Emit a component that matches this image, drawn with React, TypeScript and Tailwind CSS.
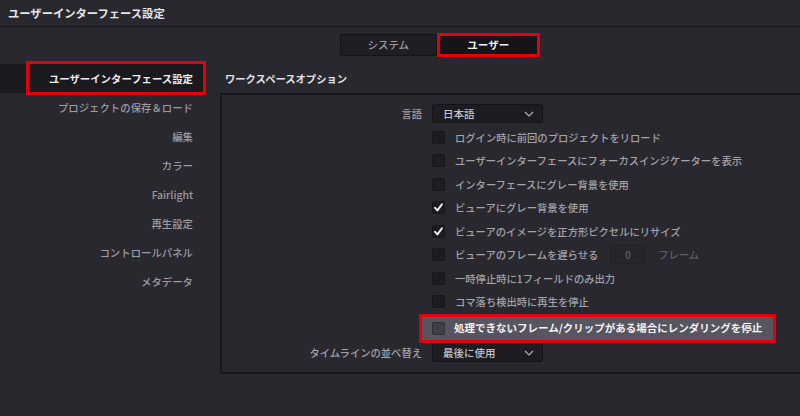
import React from "react"

const font = "font-['Noto_Sans_CJK_JP','Noto_Sans',sans-serif]"

const sidebarItems = [
  "プロジェクトの保存＆ロード",
  "編集",
  "カラー",
  "Fairlight",
  "再生設定",
  "コントロールパネル",
  "メタデータ",
]

const options: { label: string; checked: boolean; frames?: boolean }[] = [
  { label: "ログイン時に前回のプロジェクトをリロード", checked: false },
  { label: "ユーザーインターフェースにフォーカスインジケーターを表示", checked: false },
  { label: "インターフェースにグレー背景を使用", checked: false },
  { label: "ビューアにグレー背景を使用", checked: true },
  { label: "ビューアのイメージを正方形ピクセルにリサイズ", checked: true },
  { label: "ビューアのフレームを遅らせる", checked: false, frames: true },
  { label: "一時停止時に1フィールドのみ出力", checked: false },
  { label: "コマ落ち検出時に再生を停止", checked: false },
]

function Checkbox({ checked, light }: { checked?: boolean; light?: boolean }) {
  return (
    <div
      className={
        "flex h-[13px] w-[13px] shrink-0 items-center justify-center rounded-[2px] border " +
        (light ? "border-[#2e2d33] bg-[#403f45]" : "border-[#16151a] bg-[#1d1c21]")
      }
    >
      {checked && (
        <svg width="11" height="11" viewBox="0 0 11 11" fill="none">
          <path d="M2 5.8 L4.4 8.4 L9 2.2" stroke="#f4f4f4" strokeWidth="1.9" strokeLinecap="round" strokeLinejoin="round" />
        </svg>
      )}
    </div>
  )
}

function Dropdown({ value }: { value: string }) {
  return (
    <div className="flex h-[19px] w-[111px] items-center justify-between rounded-[2px] border border-[#141318] bg-[#1d1c21] pl-[10px] pr-[8px] text-[10.5px] text-[#c4c4c8]">
      <span>{value}</span>
      <svg width="10" height="6" viewBox="0 0 10 6" fill="none">
        <path d="M1 1 L5 5 L9 1" stroke="#b0b0b5" strokeWidth="1.2" />
      </svg>
    </div>
  )
}

export default function App() {
  return (
    <div className={`${font} h-[416px] w-[800px] overflow-hidden bg-[#29282f] font-medium text-[#a3a3a8]`}>
      <div className="flex h-[27px] items-center border-b border-[#18171c] pl-[8px] text-[11.3px] font-bold text-[#e6e6e8]">
        ユーザーインターフェース設定
      </div>

      <div className="ml-[340px] mt-[6px] flex h-[24px] w-[200px] items-center">
        <div className="flex h-[22px] w-[97px] items-center justify-center rounded-l-[2px] border border-[#141318] bg-[#1f1e23] text-[10.5px] text-[#9c9ca1]">
          システム
        </div>
        <div className="flex h-[24px] w-[104px] items-center justify-center border-[3px] border-[#e3000c] bg-[#151419] text-[10.5px] font-bold text-[#f2f2f2]">
          ユーザー
        </div>
      </div>

      <div className="mt-[7px] flex">
        <div className="w-[220px] shrink-0 text-[10.4px]">
          <div className="relative flex h-[29px] w-[205px] items-center justify-end bg-[#1a191e] pr-[12px] font-bold text-[#ececee]">
            ユーザーインターフェース設定
            <div className="pointer-events-none absolute bottom-[-2px] left-[26px] right-[-1px] top-[-3px] border-[3px] border-[#e3000c]" />
          </div>
          {sidebarItems.map((item) => (
            <div key={item} className="flex h-[29px] w-[205px] items-center justify-end pr-[12px] text-[#9b9ba0]">
              {item}
            </div>
          ))}
        </div>

        <div className="flex-1">
          <div className="flex h-[29px] items-center pl-[5px] text-[10.3px] font-bold text-[#e2e2e4]">
            ワークスペースオプション
          </div>
          <div className="border-y-2 border-l-2 border-[#19181d] pb-[9px] pt-[7px] text-[10.3px]">
            <div className="flex h-[23.5px] items-center">
              <div className="w-[210px] pr-[10px] text-right">言語</div>
              <Dropdown value="日本語" />
            </div>

            {options.map((o) => (
              <div key={o.label} className="flex h-[23.5px] items-center">
                <div className="w-[210px]" />
                <Checkbox checked={o.checked} />
                <span className="ml-[10px]">{o.label}</span>
                {o.frames && (
                  <>
                    <div className="ml-[12px] flex h-[19px] w-[35px] items-center justify-center border border-[#222126] bg-[#26252b] text-[10px] text-[#5e5d64]">
                      0
                    </div>
                    <span className="ml-[13px] text-[#5e5d64]">フレーム</span>
                  </>
                )}
              </div>
            ))}

            <div className="ml-[197px] flex h-[29px] w-[357px] items-center border-[3px] border-[#e3000c] bg-[#57555f] pl-[10px] text-[10.5px] font-bold text-[#f4f4f6]">
              <Checkbox light />
              <span className="ml-[9px]">処理できないフレーム/クリップがある場合にレンダリングを停止</span>
            </div>

            <div className="flex h-[20px] items-center">
              <div className="w-[210px] pr-[10px] text-right">タイムラインの並べ替え</div>
              <Dropdown value="最後に使用" />
            </div>
          </div>
        </div>
      </div>
    </div>
  )
}
